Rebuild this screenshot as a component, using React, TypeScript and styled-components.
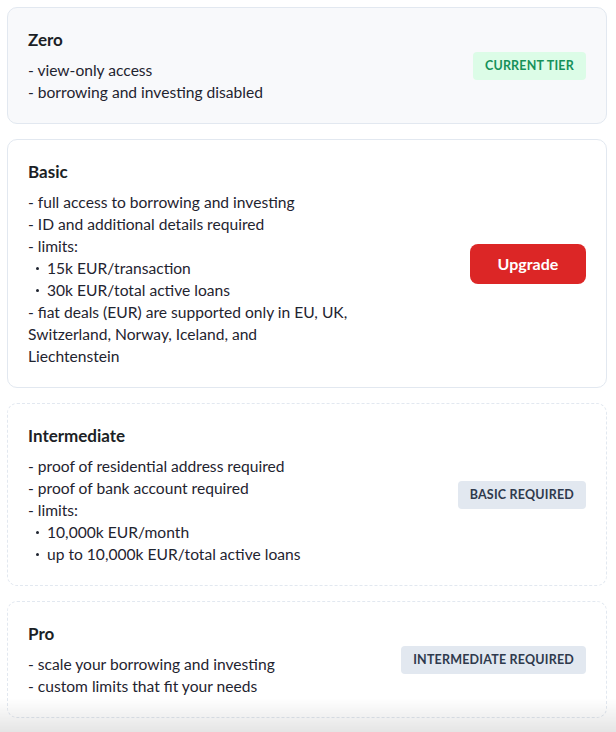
import React from 'react';
import styled, { createGlobalStyle } from 'styled-components';

type Tone = 'current' | 'active' | 'locked';

type Tier = {
    name: string;
    tone: Tone;
    lines: React.ReactNode[];
    action: React.ReactNode;
};

const GlobalStyle = createGlobalStyle`
    html, body {
        margin: 0;
        padding: 0;
        background: #ffffff;
    }
    body {
        font-family: "Lato", "Noto Sans", sans-serif;
        color: #1f2430;
    }
`;

const App: React.FC = () => {
    const tiers: Tier[] = [
        {
            name: 'Zero',
            tone: 'current',
            lines: [
                <Line key="a">- view-only access</Line>,
                <Line key="b">- borrowing and investing disabled</Line>,
            ],
            action: <Badge $variant="green">Current tier</Badge>,
        },
        {
            name: 'Basic',
            tone: 'active',
            lines: [
                <Line key="a">- full access to borrowing and investing</Line>,
                <Line key="b">- ID and additional details required</Line>,
                <Line key="c">- limits:</Line>,
                <SubLine key="d">15k EUR/transaction</SubLine>,
                <SubLine key="e">30k EUR/total active loans</SubLine>,
                <Line key="f">
                    - fiat deals (EUR) are supported only in EU, UK,<br />
                    Switzerland, Norway, Iceland, and<br />
                    Liechtenstein
                </Line>,
            ],
            action: <UpgradeButton type="button">Upgrade</UpgradeButton>,
        },
        {
            name: 'Intermediate',
            tone: 'locked',
            lines: [
                <Line key="a">- proof of residential address required</Line>,
                <Line key="b">- proof of bank account required</Line>,
                <Line key="c">- limits:</Line>,
                <SubLine key="d">10,000k EUR/month</SubLine>,
                <SubLine key="e">up to 10,000k EUR/total active loans</SubLine>,
            ],
            action: <Badge $variant="gray">Basic required</Badge>,
        },
        {
            name: 'Pro',
            tone: 'locked',
            lines: [
                <Line key="a">- scale your borrowing and investing</Line>,
                <Line key="b">- custom limits that fit your needs</Line>,
            ],
            action: <Badge $variant="gray">Intermediate required</Badge>,
        },
    ];

    return (
        <>
            <GlobalStyle />
            <Page>
                {tiers.map(tier => (
                    <Card key={tier.name} $tone={tier.tone}>
                        <Info>
                            <TierName>{tier.name}</TierName>
                            <Lines>{tier.lines}</Lines>
                        </Info>
                        <Side>{tier.action}</Side>
                    </Card>
                ))}
            </Page>
            <BottomFade />
        </>
    );
};

export default App;

const Page = styled.div`
    display: flex;
    flex-direction: column;
    gap: 15px;
    padding: 7px 9px 40px 7px;
`;

const Card = styled.div<{ $tone: Tone }>`
    display: flex;
    align-items: center;
    justify-content: space-between;
    gap: 24px;
    padding: 20px;
    border-radius: 10px;
    border: 1px ${p => (p.$tone === 'locked' ? 'dashed' : 'solid')} #e2e8f0;
    background: ${p => (p.$tone === 'current' ? '#f8f9fb' : '#ffffff')};
`;

const Info = styled.div`
    display: flex;
    flex-direction: column;
    gap: 7px;
`;

const TierName = styled.div`
    font-size: 17px;
    font-weight: 700;
    line-height: 24px;
    color: #1c1f26;
`;

const Lines = styled.div`
    display: flex;
    flex-direction: column;
    font-size: 15.6px;
    line-height: 22px;
    color: #1f2430;
`;

const Line = styled.div`
    white-space: nowrap;
`;

const SubLine = styled.div`
    position: relative;
    padding-left: 19px;
    white-space: nowrap;

    &::before {
        content: '';
        position: absolute;
        left: 8px;
        top: 10px;
        width: 3px;
        height: 3px;
        border-radius: 50%;
        background: #1f2430;
    }
`;

const Side = styled.div`
    display: flex;
    flex-shrink: 0;
    align-items: center;
`;

const Badge = styled.span<{ $variant: 'green' | 'gray' }>`
    display: inline-flex;
    align-items: center;
    height: 28px;
    padding: 0 12px;
    border-radius: 4px;
    font-size: 12.5px;
    font-weight: 700;
    letter-spacing: 0.2px;
    text-transform: uppercase;
    background: ${p => (p.$variant === 'green' ? '#dcfce7' : '#e2e8f0')};
    color: ${p => (p.$variant === 'green' ? '#16915a' : '#2f3a4d')};
`;

const UpgradeButton = styled.button`
    width: 116px;
    height: 40px;
    border: none;
    border-radius: 8px;
    background: #dc2626;
    color: #ffffff;
    font-family: "Lato", "Noto Sans", sans-serif;
    font-size: 16px;
    font-weight: 700;
    cursor: pointer;
`;

const BottomFade = styled.div`
    position: fixed;
    left: 0;
    right: 0;
    bottom: 0;
    height: 34px;
    pointer-events: none;
    background: linear-gradient(to bottom, rgba(0, 0, 0, 0), rgba(0, 0, 0, 0.1));
`;
